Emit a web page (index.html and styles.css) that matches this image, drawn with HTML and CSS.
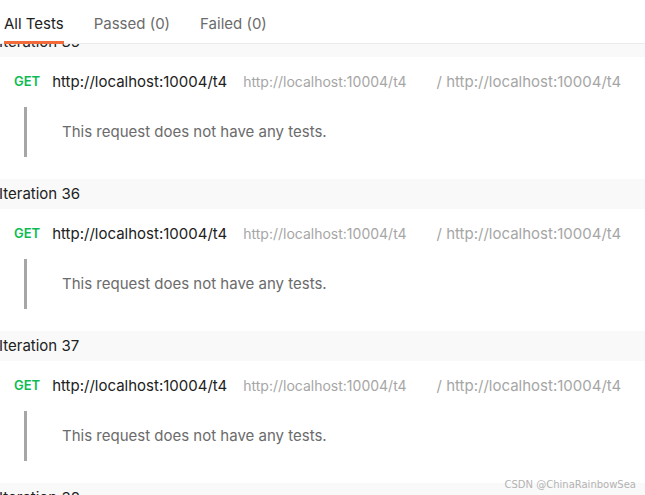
FILE: index.html
```html
<!DOCTYPE html>
<html lang="en">
<head>
    <meta charset="UTF-8">
    <meta name="viewport" content="width=device-width, initial-scale=1.0">
    <title>Run Results</title>
    <link rel="stylesheet" href="styles.css">
</head>
<body>
    <div class="tabs">
        <div class="tab active">All Tests</div>
        <div class="tab">Passed (0)</div>
        <div class="tab">Failed (0)</div>
    </div>

    <div class="results">
        <div class="results-list">
            <div class="iteration">
                <div class="iteration-title">Iteration 35</div>
                <div class="request">
                    <div class="request-line">
                        <span class="method">GET</span>
                        <span class="url">http://localhost:10004/t4</span>
                        <span class="url-small">http://localhost:10004/t4</span>
                        <span class="url-path">/ http://localhost:10004/t4</span>
                    </div>
                    <div class="tests">This request does not have any tests.</div>
                </div>
            </div>

            <div class="iteration">
                <div class="iteration-title">Iteration 36</div>
                <div class="request">
                    <div class="request-line">
                        <span class="method">GET</span>
                        <span class="url">http://localhost:10004/t4</span>
                        <span class="url-small">http://localhost:10004/t4</span>
                        <span class="url-path">/ http://localhost:10004/t4</span>
                    </div>
                    <div class="tests">This request does not have any tests.</div>
                </div>
            </div>

            <div class="iteration">
                <div class="iteration-title">Iteration 37</div>
                <div class="request">
                    <div class="request-line">
                        <span class="method">GET</span>
                        <span class="url">http://localhost:10004/t4</span>
                        <span class="url-small">http://localhost:10004/t4</span>
                        <span class="url-path">/ http://localhost:10004/t4</span>
                    </div>
                    <div class="tests">This request does not have any tests.</div>
                </div>
            </div>

            <div class="iteration">
                <div class="iteration-title">Iteration 38</div>
            </div>
        </div>
    </div>

    <div class="watermark">CSDN @ChinaRainbowSea</div>
</body>
</html>
```

FILE: styles.css
```css
body {
    margin: 0;
    font-family: Inter, "Noto Sans", sans-serif;
    background-color: #fff;
    color: #212121;
    position: relative;
    height: 495px;
    overflow: hidden;
}

.tabs {
    display: flex;
    gap: 30px;
    height: 43px;
    padding-left: 4px;
    border-bottom: 1px solid #ebebeb;
    background-color: #fff;
    position: relative;
    z-index: 1;
}

.tab {
    font-size: 15px;
    line-height: 48px;
    color: #6b6b6b;
}

.tab.active {
    color: #212121;
    border-bottom: 3px solid #f26b3a;
    height: 41px;
}

.results {
    height: 451px;
    overflow: hidden;
}

.results-list {
    margin-top: -17px;
}

.iteration-title {
    height: 30px;
    line-height: 30px;
    background-color: #f9f9f9;
    font-size: 15px;
    margin-left: -1px;
}

.request {
    padding: 14px 0 22px 14px;
}

.request-line {
    display: flex;
    align-items: center;
    height: 20px;
    white-space: nowrap;
}

.method {
    color: #0cbb52;
    font-weight: 600;
    font-size: 13px;
    margin-right: 12px;
}

.url {
    font-size: 15px;
    color: #212121;
    margin-right: 16px;
}

.url-small {
    font-size: 14px;
    color: #a6a6a6;
    margin-right: 30px;
}

.url-path {
    font-size: 15px;
    color: #a6a6a6;
}

.tests {
    margin: 16px 0 0 10px;
    height: 50px;
    line-height: 50px;
    border-left: 3px solid #a6a6a6;
    padding-left: 35px;
    font-size: 15px;
    color: #6b6b6b;
}

.watermark {
    position: absolute;
    right: 9px;
    bottom: 5px;
    font-family: "DejaVu Sans", sans-serif;
    font-size: 10px;
    color: #b3b3b3;
    z-index: 2;
}
```
